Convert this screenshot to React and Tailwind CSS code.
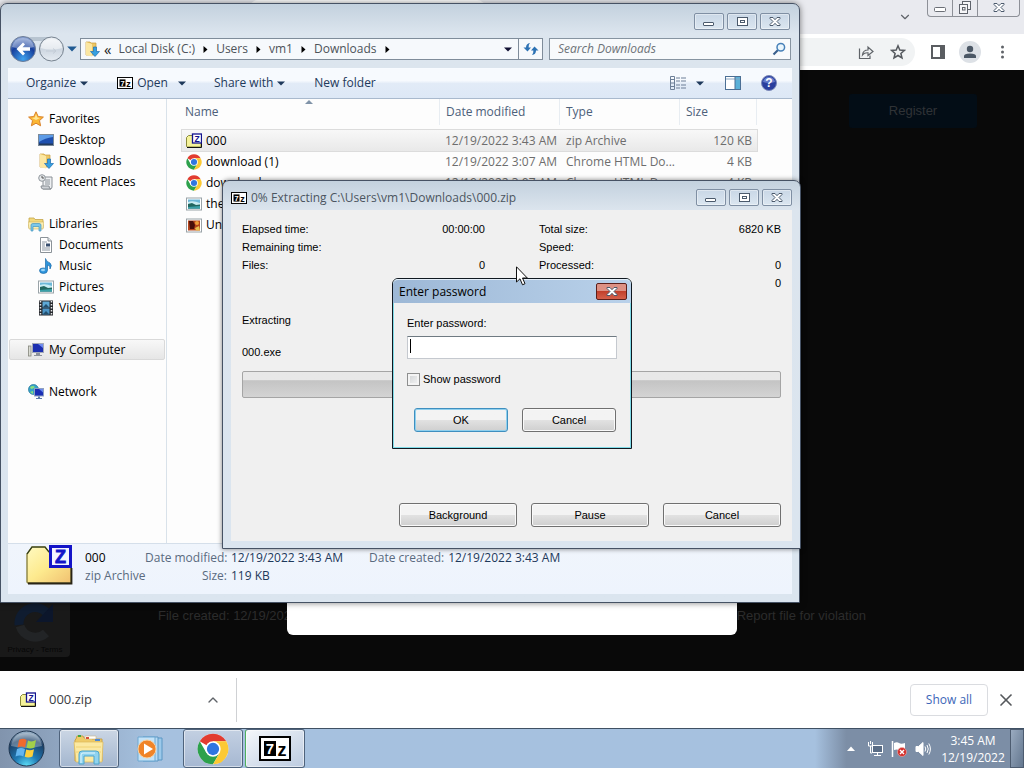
import { useState } from "react";
import { ChevronDown, ChevronUp, X } from "lucide-react";

const favorites = [
  { name: "Desktop", icon: DesktopIcon },
  { name: "Downloads", icon: DownloadsIcon },
  { name: "Recent Places", icon: RecentIcon },
];

const libraries = [
  { name: "Documents", icon: DocumentIcon },
  { name: "Music", icon: MusicIcon },
  { name: "Pictures", icon: PictureIcon },
  { name: "Videos", icon: VideoIcon },
];

const files = [
  { name: "000", date: "12/19/2022 3:43 AM", type: "zip Archive", size: "120 KB", icon: ZipIcon, selected: true },
  { name: "download (1)", date: "12/19/2022 3:07 AM", type: "Chrome HTML Do...", size: "4 KB", icon: ChromeIcon },
  { name: "download", date: "12/19/2022 3:07 AM", type: "Chrome HTML Do...", size: "4 KB", icon: ChromeIcon },
  { name: "the", date: "", type: "", size: "", icon: PictureIcon },
  { name: "Unt", date: "", type: "", size: "", icon: PhotoIcon },
];

/* ---------- icons ---------- */

function ZipIcon({ className = "size-4" }) {
  return (
    <svg className={className} viewBox="0 0 16 16" aria-hidden="true">
      <path d="M.5 13.5V4.5L2.5 2.5H6L7 4H15V14H1Z" fill="#f5f29a" stroke="#8a8a3a" />
      <path d="M1 14.5H15.5V10" fill="none" stroke="#111" />
      <rect x="6.5" y="1" width="9" height="9" fill="#fff" stroke="#12128e" strokeWidth="1.3" />
      <text x="11" y="8.6" fontSize="8.5" fontWeight="bold" textAnchor="middle" fill="#12128e" fontFamily="Liberation Sans, sans-serif">Z</text>
    </svg>
  );
}

function BigZipIcon() {
  return (
    <svg className="h-[42px] w-[47px]" viewBox="0 0 47 42" aria-hidden="true">
      <defs>
        <linearGradient id="bigfolder" x1="0" y1="0" x2="1" y2="1">
          <stop offset="0" stopColor="#fffac0" />
          <stop offset=".5" stopColor="#fdea8e" />
          <stop offset="1" stopColor="#f0c070" />
        </linearGradient>
      </defs>
      <path d="M1 38V10L6 3H19L23 8H45V39H2Z" fill="url(#bigfolder)" stroke="#8b8340" strokeWidth="1.4" />
      <path d="M1 10L6 3H19L23 8" fill="none" stroke="#2b3a1a" strokeWidth="1.2" />
      <path d="M2 39.5H45.5V24" fill="none" stroke="#2a2516" strokeWidth="1.8" />
      <rect x="24.5" y="2.5" width="20" height="20" fill="#f4f4ff" stroke="#1414c8" strokeWidth="3" />
      <text x="34.5" y="19" fontSize="18" fontWeight="bold" textAnchor="middle" fill="#1414c8" stroke="#1414c8" strokeWidth=".8" fontFamily="Liberation Sans, sans-serif">Z</text>
    </svg>
  );
}

function SevenZipIcon({ className = "h-3 w-4" }) {
  return (
    <svg className={className} viewBox="0 0 32 25" preserveAspectRatio="none" aria-hidden="true">
      <rect x="1" y="1" width="30" height="23" fill="#fff" stroke="#000" strokeWidth="2" />
      <rect x="5" y="5" width="12" height="15" fill="#000" />
      <text x="11" y="18" fontSize="15" fontWeight="bold" textAnchor="middle" fill="#fff" fontFamily="Liberation Sans, sans-serif">7</text>
      <text x="23" y="20" fontSize="18" fontWeight="bold" textAnchor="middle" fill="#000" fontFamily="Liberation Sans, sans-serif">z</text>
    </svg>
  );
}

function ChromeIcon({ className = "size-4" }) {
  return (
    <svg className={className} viewBox="0 0 48 48" aria-hidden="true">
      <circle cx="24" cy="24" r="23" fill="#fff" />
      <path d="M24 24L4.080 12.500A23 23 0 0 1 43.920 12.500H24Z" fill="#e23c30" />
      <path d="M14.040 29.750L4.080 12.500A23 23 0 0 0 24 47L33.960 29.750Z" fill="#2da14c" />
      <path d="M24 47A23 23 0 0 0 43.920 12.500H24L33.960 29.750Z" fill="#fcc934" />
      <circle cx="24" cy="24" r="11.500" fill="#fff" />
      <circle cx="24" cy="24" r="9.200" fill="#2f76e0" />
    </svg>
  );
}

function PictureIcon({ className = "size-4" }) {
  return (
    <svg className={className} viewBox="0 0 16 16" aria-hidden="true">
      <rect x=".5" y="2" width="15" height="12" fill="#fff" stroke="#9aa3a8" />
      <rect x="2" y="3.500" width="12" height="9" fill="#6db8d8" />
      <path d="M2 6Q7 4 14 7V9H2Z" fill="#c9ecf2" />
      <path d="M2 8L6 7L10 9L14 8.500V12.500H2Z" fill="#22675f" />
      <path d="M2 11L14 10V12.500H2Z" fill="#3aa0a8" />
    </svg>
  );
}

function PhotoIcon({ className = "size-4" }) {
  return (
    <svg className={className} viewBox="0 0 16 16" aria-hidden="true">
      <rect x=".5" y="2" width="15" height="13" fill="#fff" stroke="#9aa3a8" />
      <rect x="2" y="3.500" width="12" height="10" fill="#b5451b" />
      <path d="M3 4H7L9 8L8 12H4Z" fill="#4a0f0a" />
      <circle cx="11" cy="6" r="2" fill="#f0a03a" />
      <path d="M9 11L13 9L14 13.500H10Z" fill="#e8c050" />
    </svg>
  );
}

function StarIcon() {
  return (
    <svg className="size-4" viewBox="0 0 16 16" aria-hidden="true">
      <path d="M8 .8L10.200 5.500L15.400 6.100L11.500 9.600L12.600 14.800L8 12.200L3.400 14.800L4.500 9.600L.6 6.100L5.800 5.500Z" fill="#fbb734" stroke="#d9822b" />
      <path d="M8 3L9.300 6.500L12 7L8 9L4 7L6.800 6.500Z" fill="#ffe696" />
    </svg>
  );
}

function DesktopIcon() {
  return (
    <svg className="size-4" viewBox="0 0 16 16" aria-hidden="true">
      <rect x=".5" y="2.500" width="15" height="11" fill="#1e4fae" stroke="#7a8a9a" />
      <path d="M1 3H15V5Q7 6 1 10Z" fill="#5d9be6" />
      <rect x="1" y="11.500" width="14" height="1.500" fill="#233a5c" />
    </svg>
  );
}

function DownloadsIcon() {
  return (
    <svg className="size-4" viewBox="0 0 16 16" aria-hidden="true">
      <path d="M2 1H6L7 2H12V14H2Z" fill="#ecc765" stroke="#c99c3c" strokeWidth=".7" />
      <path d="M2 1L8 3V15.500L2 14Z" fill="#fbe7a2" />
      <path d="M9.500 6H12.500V10.500H15.500L11 15.500L6.500 10.500H9.500Z" fill="#36a0e0" stroke="#1c6fb4" strokeWidth=".7" />
    </svg>
  );
}

function RecentIcon() {
  return (
    <svg className="size-4" viewBox="0 0 16 16" aria-hidden="true">
      <path d="M5 3H14V13Q14 15 12 15H5Z" fill="#eef0f2" stroke="#8a9096" />
      <path d="M3 12H11Q11 15 13 15H5Q3 15 3 12Z" fill="#cfd3d7" stroke="#8a9096" />
      <path d="M7 6H12M7 8H12M7 10H12" stroke="#8a9299" />
      <circle cx="4" cy="4" r="3.300" fill="#e7eaec" stroke="#90979d" />
      <path d="M4 2V4H6" fill="none" stroke="#555" />
    </svg>
  );
}

function LibraryIcon() {
  return (
    <svg className="size-4" viewBox="0 0 16 16" aria-hidden="true">
      <path d="M1 2H6L7 3.500H15V12H1Z" fill="#f3d97c" stroke="#c3a44a" strokeWidth=".8" />
      <path d="M0 6H16L15 13H1Z" fill="#fbeeb4" stroke="#cdb25c" strokeWidth=".6" />
      <path d="M3 15V9Q3 7.500 5 7.500H11Q13 7.500 13 9V15H11V10.500H5V15Z" fill="#7cc7ea" stroke="#4595bd" strokeWidth=".7" />
    </svg>
  );
}

function DocumentIcon() {
  return (
    <svg className="size-4" viewBox="0 0 16 16" aria-hidden="true">
      <path d="M2.500 .5H10L13.500 4V15.500H2.500Z" fill="#fff" stroke="#8b9298" />
      <path d="M10 .5V4H13.500" fill="#dde3e8" stroke="#8b9298" />
      <path d="M4 5H9M4 7H7M4 9H7M4 11H12M4 13H12" stroke="#8d97a2" />
      <rect x="8" y="6.500" width="4" height="3" fill="#3a5070" />
    </svg>
  );
}

function MusicIcon() {
  return (
    <svg className="size-4" viewBox="0 0 16 16" aria-hidden="true">
      <path d="M7.500 .5Q8.500 4 12 5Q14.500 7 12 11Q12.500 7.500 9.500 7V12Q9.500 15.500 5.500 15.500Q1.500 15.500 1.500 12.500Q1.500 10 5 10Q6.600 10 7.500 10.500Z" fill="#2f95dc" stroke="#1e6aa8" strokeWidth=".7" />
      <ellipse cx="5" cy="12" rx="2" ry="1.200" fill="#9bd5f7" />
    </svg>
  );
}

function VideoIcon() {
  return (
    <svg className="size-4" viewBox="0 0 16 16" aria-hidden="true">
      <rect x="1" y=".5" width="14" height="15" fill="#26292d" />
      <path d="M2.500 1V15M13.500 1V15" stroke="#e5e8ea" strokeWidth="1.500" strokeDasharray="1.500 1.500" />
      <rect x="4.500" y="1.500" width="7" height="6" fill="#5ea9d6" />
      <rect x="4.500" y="8.500" width="7" height="6" fill="#4b94c6" />
      <path d="M4.500 7.500L8 4L11.500 7.500M4.500 14.500L8 11L11.500 14.500" fill="#234f6e" />
    </svg>
  );
}

function ComputerIcon() {
  return (
    <svg className="size-4" viewBox="0 0 16 16" aria-hidden="true">
      <rect x=".5" y="4" width="2.500" height="10" fill="#dadcd4" stroke="#84867c" strokeWidth=".8" />
      <rect x="4.500" y="1.500" width="11" height="9" fill="#1c2fb0" stroke="#a3a9b8" />
      <path d="M10 2H15V6Z" fill="#6f8cf0" />
      <path d="M8 11H12V13H14V14H6V13H8Z" fill="#8d929c" />
    </svg>
  );
}

function NetworkIcon() {
  return (
    <svg className="size-4" viewBox="0 0 16 16" aria-hidden="true">
      <circle cx="5.500" cy="5.500" r="5" fill="#35a2c9" stroke="#217295" strokeWidth=".7" />
      <path d="M2 3Q5 1 7 3Q5 5 3 5ZM2 8L5 7L5 10Z" fill="#8be07e" />
      <rect x="6.500" y="4.500" width="9" height="7.500" fill="#1a2eb4" stroke="#8fa0c0" />
      <path d="M11 5H15V8.500Z" fill="#6989ee" />
      <path d="M10 12.500H12V14H14V15H8V14H10Z" fill="#5d7ba8" />
    </svg>
  );
}

function Triangle({ className = "" }) {
  return (
    <svg className={"h-[5px] w-2 " + className} viewBox="0 0 8 5" aria-hidden="true">
      <path d="M0 .5H8L4 4.500Z" fill="currentColor" />
    </svg>
  );
}

function CaptionIcon({ kind }) {
  return (
    <svg className="h-3 w-3.5" viewBox="0 0 14 12" fill="#fff" stroke="#4b5a6c" aria-hidden="true">
      {kind === "min" && <rect x="1.500" y="6.500" width="10" height="3" rx=".5" />}
      {kind === "max" && (
        <>
          <rect x="2.500" y="1.500" width="10" height="8" />
          <rect x="5.500" y="4.500" width="4" height="2" />
        </>
      )}
      {kind === "close" && (
        <path d="M2 1.500H5L7 3.700L9 1.500H12V2.500L9 5.500L12 8.500V9.500H9L7 7.300L5 9.500H2V8.500L5 5.500L2 2.500Z" />
      )}
    </svg>
  );
}

/* ---------- shared pieces ---------- */

function CaptionButtons() {
  return (
    <div className="flex gap-[3px]">
      {["min", "max", "close"].map((kind) => (
        <button
          key={kind}
          aria-label={kind}
          className="flex h-[17px] w-[30px] items-center justify-center rounded-[2px] border border-[#7f8fa3] bg-gradient-to-b from-[#c9d7e6] to-[#dbe6f0] shadow-[inset_0_0_0_1px_rgba(255,255,255,0.4)]"
        >
          <CaptionIcon kind={kind} />
        </button>
      ))}
    </div>
  );
}

function ClassicButton({ children, primary, className = "" }) {
  return (
    <button
      className={
        "h-6 rounded-[3px] border bg-gradient-to-b from-[#f3f3f3] from-50% via-[#e2e2e2] via-50% to-[#cfcfcf] text-center " +
        (primary ? "border-[#3f8fbf] shadow-[inset_0_0_0_1px_#8fd0ee] " : "border-[#707070] shadow-[inset_0_0_0_1px_#fafafa] ") +
        className
      }
    >
      {children}
    </button>
  );
}

function SideItem({ icon: Icon, name, nested, selected }) {
  return (
    <li
      className={
        "mr-px ml-px flex h-[21px] items-center gap-[5px] rounded-[2px] border " +
        (nested ? "pl-7 " : "pl-[18px] ") +
        (selected ? "border-[#d9d9d9] bg-gradient-to-b from-[#f8f8f8] to-[#e6e6e6]" : "border-transparent")
      }
    >
      <Icon />
      <span>{name}</span>
    </li>
  );
}

/* ---------- windows ---------- */

function Explorer() {
  return (
    <section className="absolute top-[3px] left-0 flex h-[600px] w-[800px] flex-col rounded-t-[7px] border border-[#465264] bg-gradient-to-b from-[#c3d1de] via-[#dce5ee] via-5% to-[#dbe5ef] px-[7px] pb-2 font-['Open_Sans',sans-serif] text-[12px] leading-[18px] shadow-[0_0_6px_rgba(0,0,0,0.5)]">
      <div className="flex h-[34px] justify-end pt-[9px] pr-[2px]">
        <CaptionButtons />
      </div>

      <div className="flex h-[22px] items-center pr-px">
        <svg className="h-7 w-[56px] shrink-0" viewBox="0 0 56 28" aria-hidden="true">
          <defs>
            <radialGradient id="backfill" cx=".5" cy=".9" r=".9">
              <stop offset="0" stopColor="#3fa2ee" />
              <stop offset=".6" stopColor="#173f9c" />
              <stop offset="1" stopColor="#8fa7d6" />
            </radialGradient>
            <linearGradient id="fwdfill" x1="0" y1="0" x2="0" y2="1">
              <stop offset="0" stopColor="#eef2f6" />
              <stop offset=".5" stopColor="#cdd6e0" />
              <stop offset="1" stopColor="#e6ecf2" />
            </linearGradient>
          </defs>
          <path d="M15 2H44V6H15Z" fill="#b8c4d0" />
          <circle cx="15" cy="14" r="12.500" fill="url(#backfill)" stroke="#6d7c96" />
          <path d="M4 12Q6 3 15 3T26 12Q15 15 4 12Z" fill="#fff" opacity=".35" />
          <path d="M15 7.500L8.500 14L15 20.500L17 18.500L14.500 15.700H22V12.300H14.500L17 9.500Z" fill="#fff" />
          <circle cx="43.500" cy="14" r="12" fill="url(#fwdfill)" stroke="#76828f" />
          <path d="M32.500 13Q34 4 43.500 4T54.500 13Q43 16 32.500 13Z" fill="#fff" opacity=".5" />
          <path d="M38 16H47M45 13.500L48 16L45 18.500" fill="none" stroke="#c3ccd6" />
        </svg>
        <Triangle className="mx-[3px] !h-1.5 !w-2.5 shrink-0 text-[#205a92]" />
        <div className="flex h-[22px] min-w-0 flex-1 items-center border border-[#7f8c9a] bg-[#f6f9fc] pl-[3px] text-[#4d535a]">
          <DownloadsIcon />
          <span className="ml-1 text-[15px] leading-4 text-[#222]">«</span>
          <div className="ml-[7px] flex flex-1 items-center gap-2">
            {["Local Disk (C:)", "Users", "vm1", "Downloads"].map((part) => (
              <span key={part} className="flex items-center gap-2">
                {part}
                <svg className="h-[7px] w-[5px]" viewBox="0 0 5 7" aria-hidden="true">
                  <path d="M.5 0V7L4.500 3.500Z" fill="#000" />
                </svg>
              </span>
            ))}
          </div>
          <Triangle className="mr-1.5 text-[#111133]" />
          <button aria-label="Refresh" className="flex h-5 w-6 items-center justify-center border-l border-[#7f8c9a]">
            <svg className="h-3 w-4" viewBox="0 0 16 12" fill="#2c72b4" aria-hidden="true">
              <path d="M7 0Q5.500 1 5.600 4.500H8L4.500 8.500L.5 4.500H3Q3 .5 7 0Z" />
              <path d="M9 12Q10.500 11 10.400 7.500H8L11.500 3.500L15.500 7.500H13Q13 11.500 9 12Z" />
            </svg>
          </button>
        </div>
        <div className="ml-1.5 flex h-[22px] w-[242px] items-center border border-[#8794a1] bg-[#f8fafc] pr-1 pl-2">
          <input aria-label="Search Downloads" placeholder="Search Downloads" className="min-w-0 flex-1 bg-transparent italic placeholder:text-[#6d7278]" />
          <svg className="size-3.5" viewBox="0 0 14 14" fill="none" aria-hidden="true">
            <path d="M1.500 12.500L6 8" stroke="#3a5f8c" strokeWidth="2.200" />
            <circle cx="8.800" cy="5.200" r="3.800" fill="#eaf6fd" stroke="#4780b8" strokeWidth="1.500" />
          </svg>
        </div>
      </div>

      <div className="mt-2 flex h-[31px] items-center border-t border-b border-t-[#f8fbff] border-b-[#a9b9cd] bg-gradient-to-b from-[#f7fafe] from-40% via-[#e2ebf7] via-50% to-[#dde8f6] pr-[15px] pb-px pl-[18px] text-[#1e395b]">
        <button className="flex items-center gap-1">
          Organize <Triangle />
        </button>
        <button className="ml-[29px] flex items-center gap-1">
          <SevenZipIcon />
          Open <Triangle className="ml-1.5" />
        </button>
        <button className="ml-7 flex items-center gap-1">
          Share with <Triangle />
        </button>
        <button className="ml-[29px]">New folder</button>
        <button aria-label="Views" className="ml-auto flex items-center gap-2.5">
          <svg className="h-3.5 w-4" viewBox="0 0 16 14" fill="none" stroke="#6d7f97" aria-hidden="true">
            <path d="M.5 .5H4.500V13.500H.5ZM.5 3.500H4.500M.5 7H4.500M.5 10.500H4.500" />
            <path d="M6 2H10M11 2H16M6 5H10M11 5H16M6 9H10M11 9H16M6 12H10M11 12H16" />
          </svg>
          <Triangle />
        </button>
        <button aria-label="Preview pane" className="ml-[21px]">
          <svg className="h-3.5 w-4" viewBox="0 0 16 14" aria-hidden="true">
            <rect x=".5" y=".5" width="15" height="13" fill="#fff" stroke="#4c6f94" />
            <rect x="10" y="1" width="5" height="12" fill="#5bb1d8" />
            <path d="M1 3H15" stroke="#8aa5c0" />
            <path d="M10 1V13" stroke="#4c6f94" />
          </svg>
        </button>
        <button aria-label="Help" className="ml-5">
          <svg className="size-4" viewBox="0 0 16 16" aria-hidden="true">
            <circle cx="8" cy="8" r="7.500" fill="#2b3f9e" stroke="#7b88b8" />
            <path d="M2 7Q3 2 8 2T14 7Q8 9 2 7Z" fill="#7f95dd" opacity=".7" />
            <text x="8" y="12.300" fontSize="12" fontWeight="bold" textAnchor="middle" fill="#fff" fontFamily="Liberation Sans, sans-serif">?</text>
          </svg>
        </button>
      </div>

      <div className="flex min-h-0 flex-1 bg-[#fdfdfd]">
        <nav className="w-[159px] shrink-0 border-r border-[#d9e2ea] pt-[9px] text-[#000]">
          <ul>
            <SideItem icon={StarIcon} name="Favorites" />
            {favorites.map((f) => (
              <SideItem key={f.name} {...f} nested />
            ))}
          </ul>
          <ul className="mt-[21px]">
            <SideItem icon={LibraryIcon} name="Libraries" />
            {libraries.map((l) => (
              <SideItem key={l.name} {...l} nested />
            ))}
          </ul>
          <ul className="mt-[21px] flex flex-col gap-[21px]">
            <SideItem icon={ComputerIcon} name="My Computer" selected />
            <SideItem icon={NetworkIcon} name="Network" />
          </ul>
        </nav>

        <div className="relative min-w-0 flex-1 pl-[15px]">
          <svg className="absolute top-px left-[138px] h-1 w-2" viewBox="0 0 8 4" aria-hidden="true">
            <path d="M0 4L4 0L8 4Z" fill="#8093a8" />
          </svg>
          <table className="w-[575px] table-fixed border-separate border-spacing-0 text-[#6d6d6d]">
            <thead>
              <tr className="h-[26px] text-left text-[#4c607a]">
                <th className="w-[258px] border-r border-[#e8edf2] pl-[3px] font-normal">Name</th>
                <th className="w-[120px] border-r border-[#e8edf2] pl-1.5 font-normal">Date modified</th>
                <th className="w-[120px] border-r border-[#e8edf2] pl-1.5 font-normal">Type</th>
                <th className="border-r border-[#e8edf2] pl-1.5 font-normal">Size</th>
              </tr>
              <tr className="h-[5px]" />
            </thead>
            <tbody>
              {files.map((f, i) => (
                <tr
                  key={i}
                  className={"h-[21px] " + (f.selected ? "bg-gradient-to-b from-[#f8f8f8] to-[#e9e9e9] outline outline-[#dcdcdc]" : "")}
                >
                  <td className="p-0 pl-1 text-black">
                    <div className="flex items-center gap-1">
                      <f.icon />
                      {f.name}
                    </div>
                  </td>
                  <td className="p-0 pl-[5px] whitespace-nowrap">{f.date}</td>
                  <td className="p-0 pl-1.5 whitespace-nowrap">{f.type}</td>
                  <td className="p-0 pr-[5px] text-right whitespace-nowrap">{f.size}</td>
                </tr>
              ))}
            </tbody>
          </table>
        </div>
      </div>

      <footer className="flex h-[51px] border-t border-[#d5dfea] bg-gradient-to-b from-[#f0f5fc] to-[#eef4fd] pl-[18px] text-[#5a6b80]">
        <BigZipIcon />
        <div className="ml-3 w-[60px] pt-[5px]">
          <div className="text-black">000</div>
          <div className="whitespace-nowrap">zip Archive</div>
        </div>
        <dl className="grid auto-rows-[18px] grid-cols-[82px_auto] gap-x-1 pt-[5px]">
          <dt className="text-right whitespace-nowrap">Date modified:</dt>
          <dd className="text-[#1e395b]">12/19/2022 3:43 AM</dd>
          <dt className="text-right">Size:</dt>
          <dd className="text-[#1e395b]">119 KB</dd>
        </dl>
        <dl className="flex gap-1 pt-[5px] pl-[26px]">
          <dt>Date created:</dt>
          <dd className="text-[#1e395b]">12/19/2022 3:43 AM</dd>
        </dl>
      </footer>
    </section>
  );
}

function Stat({ label, value }) {
  return (
    <div className="flex h-[18px] justify-between">
      <span>{label}</span>
      <span>{value}</span>
    </div>
  );
}

function ExtractWindow() {
  return (
    <section className="absolute top-[180px] left-[222px] flex h-[369px] w-[579px] flex-col rounded-t-[7px] border border-[#465264] bg-gradient-to-b from-[#c3d1de] via-[#dce5ee] via-8% to-[#dbe5ef] px-2 pb-[7px] shadow-[0_0_5px_rgba(0,0,0,0.5)]">
      <header className="flex h-[29px] items-start pt-2">
        <SevenZipIcon className="mt-[3px] h-3 w-4" />
        <h2 className="ml-1 flex-1 font-['Open_Sans',sans-serif] text-[12px] leading-[18px] text-[#4b5560]">
          0% Extracting C:\Users\vm1\Downloads\000.zip
        </h2>
        <CaptionButtons />
      </header>
      <div className="flex flex-1 flex-col bg-[#f0f0f0] px-[11px] pt-2.5 font-['Liberation_Sans',sans-serif] text-[11px] leading-[18px] text-black">
        <div className="flex gap-[54px]">
          <div className="w-[243px]">
            <Stat label="Elapsed time:" value="00:00:00" />
            <Stat label="Remaining time:" />
            <Stat label="Files:" value="0" />
          </div>
          <div className="flex-1">
            <Stat label="Total size:" value="6820 KB" />
            <Stat label="Speed:" />
            <Stat label="Processed:" value="0" />
            <Stat value="0" />
          </div>
        </div>
        <p className="mt-[19px]">Extracting</p>
        <p className="mt-3.5">000.exe</p>
        <div
          role="progressbar"
          aria-label="Extracting"
          aria-valuenow={0}
          className="mt-2.5 h-[27px] rounded-[2px] border border-[#a5a5a5] bg-gradient-to-b from-[#e8e8e8] from-30% via-[#c4c4c4] via-35% to-[#d4d4d4]"
        />
        <div className="mt-auto mb-3.5 flex justify-end gap-3.5">
          <ClassicButton className="w-[118px]">Background</ClassicButton>
          <ClassicButton className="w-[118px]">Pause</ClassicButton>
          <ClassicButton className="w-[118px]">Cancel</ClassicButton>
        </div>
      </div>
    </section>
  );
}

function PasswordDialog() {
  const [password, setPassword] = useState("");
  const [show, setShow] = useState(false);

  return (
    <form
      onSubmit={(e) => e.preventDefault()}
      className="absolute top-[278px] left-[392px] flex h-[171px] w-60 flex-col rounded-t-[6px] border border-[#101820] bg-[#f0f0f0] font-['Liberation_Sans',sans-serif] text-[11px] leading-[18px] text-black shadow-[inset_0_0_0_1px_#7fdbe8]"
    >
      <header className="flex h-6 items-center justify-between rounded-t-[5px] border-t border-[#e4eef8] bg-gradient-to-r from-[#9db8d6] to-[#b9d1ea] pr-1 pl-1.5">
        <h2 className="font-['Open_Sans',sans-serif] text-[12px]">Enter password</h2>
        <button
          type="button"
          aria-label="Close"
          className="flex h-[17px] w-[31px] items-center justify-center rounded-[2px] border border-[#5c1f1a] bg-gradient-to-b from-[#dd9184] from-45% via-[#c2402c] via-50% to-[#d5604a]"
        >
          <CaptionIcon kind="close" />
        </button>
      </header>
      <div className="flex flex-col pt-[11px] pr-[15px] pl-3.5">
        <label htmlFor="pw">Enter password:</label>
        <div className="relative mt-1">
          <input
            id="pw"
            type={show ? "text" : "password"}
            value={password}
            onChange={(e) => setPassword(e.target.value)}
            className="block h-[23px] w-[210px] border border-[#c5c9cf] border-t-[#6f7a82] bg-white px-0.5 outline-none"
          />
          {!password && <span className="pointer-events-none absolute top-[3px] left-[3px] h-3.5 w-px bg-black" />}
        </div>
        <div className="mt-[11px] flex items-center gap-[3px]">
          <input
            id="show"
            type="checkbox"
            checked={show}
            onChange={(e) => setShow(e.target.checked)}
            className="size-[13px] appearance-none border border-[#8e8f8f] bg-gradient-to-br from-[#cfd2d4] to-[#f6f6f6] shadow-[inset_0_0_0_2px_#f4f4f4] checked:bg-[#4b6a9a]"
          />
          <label htmlFor="show">Show password</label>
        </div>
        <div className="mt-5 flex justify-end gap-3.5">
          <ClassicButton primary className="w-[94px]">OK</ClassicButton>
          <ClassicButton className="w-[94px]">Cancel</ClassicButton>
        </div>
      </div>
    </form>
  );
}

/* ---------- browser and taskbar ---------- */

function Browser() {
  return (
    <div className="flex flex-1 flex-col font-['Open_Sans',sans-serif]">
      <div className="relative flex h-[34px] items-start justify-end bg-[#e9eaef] pr-1">
        <div className="absolute top-0 left-[250px] h-full w-[235px] rounded-t-lg bg-white" />
        <ChevronDown className="mt-2.5 mr-[15px] size-3.5 text-[#5f6368]" />
        <div className="flex h-[17px] rounded-b-[4px] border border-t-0 border-[#8d9097] bg-[#e9eaef]">
          <button aria-label="Minimize" className="flex w-[25px] items-center justify-center border-r border-[#8d9097]">
            <svg className="h-2 w-3" viewBox="0 0 12 8" aria-hidden="true">
              <rect x=".5" y="3.500" width="11" height="4" rx="1" fill="#fff" stroke="#6b6f76" />
            </svg>
          </button>
          <button aria-label="Restore" className="flex w-[25px] items-center justify-center border-r border-[#8d9097]">
            <svg className="size-3.5" viewBox="0 0 14 14" fill="#f6f6f8" stroke="#5f636b" aria-hidden="true">
              <rect x="4.500" y=".5" width="8" height="8" />
              <rect x="1.500" y="3.500" width="8" height="9" />
              <rect x="4.500" y="6.500" width="2.500" height="2.500" />
            </svg>
          </button>
          <button aria-label="Close browser" className="flex w-[41px] items-center justify-center">
            <CaptionIcon kind="close" />
          </button>
        </div>
      </div>

      <div className="flex h-9 items-center justify-end bg-white pr-2.5">
        <div className="flex h-7 flex-1 items-center justify-end gap-4 rounded-full bg-[#f1f3f4] pr-[9px]">
          <svg className="size-4" viewBox="0 0 16 16" fill="none" stroke="#5f6368" strokeWidth="1.200" aria-hidden="true">
            <path d="M1.500 4.500V14.500H12V11.500" />
            <path d="M4.500 11Q5 6 10 6V3L15 7.500L10 11.500V8.800Q6.500 8.500 4.500 11Z" />
          </svg>
          <svg className="size-4" viewBox="0 0 16 16" fill="none" stroke="#55595e" strokeWidth="1.500" aria-hidden="true">
            <path d="M8 1.800L9.800 6L14.400 6.400L10.900 9.400L12 14L8 11.500L4 14L5.100 9.400L1.600 6.400L6.200 6Z" />
          </svg>
        </div>
        <svg className="ml-4 h-3.5 w-3.5" viewBox="0 0 14 14" aria-hidden="true">
          <rect x="1" y="1" width="12" height="12" fill="#fff" stroke="#5a5d61" strokeWidth="2" />
          <rect x="9" y="1" width="4" height="12" fill="#5a5d61" />
        </svg>
        <svg className="ml-3.5 size-[22px]" viewBox="0 0 22 22" aria-hidden="true">
          <circle cx="11" cy="11" r="11" fill="#dde1e6" />
          <circle cx="11" cy="8" r="3.200" fill="#4c5866" />
          <path d="M5 17V15Q5 12.500 11 12.500T17 15V17Z" fill="#4c5866" />
        </svg>
        <svg className="mr-2.5 ml-5 h-3.5 w-[3px]" viewBox="0 0 3 14" fill="#5f6368" aria-hidden="true">
          <circle cx="1.500" cy="2" r="1.500" />
          <circle cx="1.500" cy="7" r="1.500" />
          <circle cx="1.500" cy="12" r="1.500" />
        </svg>
      </div>

      <main className="relative flex flex-1 flex-col justify-between bg-[#090909] pt-6 pb-[46px] font-['Liberation_Sans',sans-serif] text-[13px] leading-[18px]">
        <button className="mr-[47px] h-[34px] w-[128px] self-end rounded-[3px] bg-[#030d16] text-[#303336]">Register</button>
        <div className="flex justify-between px-[158px] text-[#2c2c2c]">
          <span>File created: 12/19/2022</span>
          <a href="#report" className="whitespace-nowrap">Report file for violation</a>
        </div>
        <div className="absolute bottom-9 left-[287px] h-[300px] w-[450px] rounded-b-[6px] bg-white" />
        <div className="absolute bottom-3.5 left-0 flex h-16 w-[70px] flex-col items-center justify-end rounded-r-sm bg-[#191919] pb-px text-[8px] leading-3 text-[#060606]">
          <svg className="size-11" viewBox="0 0 44 44" fill="none" strokeWidth="9" aria-hidden="true">
            <path d="M7 26A16 16 0 0 0 33 33" stroke="#222426" />
            <path d="M6 25A16 16 0 0 1 34 13" stroke="#0f1c30" />
            <path d="M40 4V22H23Z" fill="#0c162b" />
          </svg>
          <span>Privacy - Terms</span>
        </div>
      </main>

      <div className="flex h-[57px] items-center bg-white text-[#3c4043]">
        <div className="flex h-11 w-[237px] items-center border-r border-[#cfd1d4] pl-5">
          <ZipIcon />
          <span className="ml-[13px] flex-1 text-[13px]">000.zip</span>
          <ChevronUp className="mr-[15px] size-4 text-[#5f6368]" />
        </div>
        <button className="ml-auto h-8 w-[78px] rounded-[4px] border border-[#dadce0] text-[12px] text-[#3c66b8]">Show all</button>
        <button aria-label="Close downloads" className="mr-2 ml-2">
          <X className="size-5 text-[#55585c]" strokeWidth={2} />
        </button>
      </div>
    </div>
  );
}

function Taskbar() {
  const openApp =
    "flex h-[39px] w-[60px] items-center justify-center rounded-[3px] border border-[#4f637c] shadow-[inset_0_0_0_1px_rgba(255,255,255,0.5)] ";

  return (
    <div className="relative z-10 flex h-10 items-center border-t border-[#3f5063] bg-gradient-to-r from-[#8194ad] via-[#a6c1df] via-15% to-[#a6c1df] font-['Open_Sans',sans-serif]">
      <button aria-label="Start" className="mr-3.5 ml-2">
        <svg className="size-[37px]" viewBox="0 0 37 37" aria-hidden="true">
          <defs>
            <radialGradient id="orb" cx=".5" cy="1" r="1">
              <stop offset="0" stopColor="#5ee0f8" />
              <stop offset=".35" stopColor="#1f7ab5" />
              <stop offset=".75" stopColor="#1b3f66" />
              <stop offset="1" stopColor="#a9c0d4" />
            </radialGradient>
          </defs>
          <circle cx="18.500" cy="18.500" r="17.500" fill="url(#orb)" stroke="#1f3650" />
          <path d="M3 16Q5 3 18.500 3T34 16Q18 20 3 16Z" fill="#fff" opacity=".3" />
          <path d="M11 10Q15 7.500 18.500 10L17 17.500Q13.500 15.500 9.500 17.500Z" fill="#ef6a2e" />
          <path d="M20 10.500Q24 12.500 28 10L26.500 17.500Q22.500 19.500 18.500 17.800Z" fill="#a2d04a" />
          <path d="M9 19Q13 17 17 19L15.300 26.500Q12 24.500 7.500 26.500Z" fill="#62b5f0" />
          <path d="M18.200 19.500Q22 21.300 26 19.200L24.500 26.500Q20.500 28.500 16.700 26.800Z" fill="#fccf3c" />
        </svg>
      </button>
      <button aria-label="Windows Explorer" className={openApp + "bg-gradient-to-b from-[#cbd6e4] to-[#a3b6cf]"}>
        <svg className="size-8" viewBox="0 0 32 32" aria-hidden="true">
          <path d="M3 6L4 3H10L11 5H18L19 6H29V28H2V7Z" fill="#eecb67" stroke="#c9a14a" />
          <rect x="5" y="2" width="3" height="2" fill="#41a541" />
          <path d="M12 3H23V6H12Z" fill="#fff" stroke="#cbb684" strokeWidth=".6" />
          <rect x="13" y="4" width="3" height="2" fill="#d75038" />
          <rect x="22" y="6" width="5" height="2" fill="#4d88d4" />
          <path d="M1 9H30L29 29H3Z" fill="#fbe9a2" stroke="#dcb959" strokeWidth=".7" />
          <path d="M3 14H28M3 19H28" stroke="#efd274" />
          <path d="M6 31V21Q6 18 9 18H23Q26 18 26 21V31H21V23H11V31Z" fill="#8fd3ef" stroke="#4da4cb" />
          <path d="M8 30V22Q8 20 10 20H22" fill="none" stroke="#e4f7fd" />
        </svg>
      </button>
      <button aria-label="Media Player" className="flex h-[39px] w-[64px] items-center justify-center">
        <svg className="h-7 w-8" viewBox="0 0 32 28" aria-hidden="true">
          <path d="M12 3L27 3V25H12Z" fill="#9cc9ea" stroke="#5a97c4" />
          <path d="M8 2H23V26H8Z" fill="#b8dbf4" stroke="#5a97c4" />
          <path d="M3 2H20V26H3Z" fill="#c4e3f8" stroke="#6ca8d2" />
          <circle cx="12" cy="14" r="9" fill="#f08428" stroke="#f8d0a0" />
          <path d="M9 8.500L18 14L9 19.500Z" fill="#fff" />
        </svg>
      </button>
      <button aria-label="Google Chrome" className={openApp + "mr-0.5 bg-gradient-to-b from-[#c3d0e2] to-[#a6b8d2]"}>
        <ChromeIcon className="size-8" />
      </button>
      <button aria-label="7-Zip" className={openApp + "border-l-[#4fb05c] bg-gradient-to-br from-[#f5f8fb] to-[#bccbe0]"}>
        <SevenZipIcon className="h-[25px] w-8" />
      </button>

      <div className="ml-auto flex h-full items-center bg-gradient-to-r from-[#a6c1df] to-[#7c8ea6] to-15% pl-8 text-white">
        <svg className="h-1.5 w-2" viewBox="0 0 8 6" aria-hidden="true">
          <path d="M0 5L4 .5L8 5Z" fill="#fff" />
        </svg>
        <svg className="ml-3 size-4" viewBox="0 0 16 16" fill="none" aria-hidden="true">
          <rect x="5.500" y="4.500" width="10" height="7" fill="#5a6d86" stroke="#fff" />
          <path d="M10.500 12V14.500M7 14.500H14" stroke="#fff" />
          <path d="M1.500 1V5H5.500V1M3.500 0V3M3.500 5V12H5" stroke="#fff" />
        </svg>
        <svg className="ml-2 size-4" viewBox="0 0 16 16" aria-hidden="true">
          <path d="M1.500 0V16" stroke="#fff" strokeWidth="1.500" />
          <path d="M3 2Q6 .5 8 2T14 2V9Q10 10 8 9T3 9Z" fill="#fff" />
          <circle cx="11" cy="11" r="4.500" fill="#d32f2b" stroke="#f2b4b0" strokeWidth=".6" />
          <path d="M9 9L13 13M13 9L9 13" stroke="#fff" strokeWidth="1.400" />
        </svg>
        <svg className="ml-2 size-4" viewBox="0 0 16 16" fill="none" stroke="#fff" aria-hidden="true">
          <path d="M1 5.500H3.500L8 1.500V14.500L3.500 10.500H1Z" fill="#fff" />
          <path d="M10 5.500Q11.500 8 10 10.500M12 4Q14.500 8 12 12M13.800 2.500Q17 8 13.800 13.500" />
        </svg>
        <div className="mr-[5px] ml-2.5 w-16 text-center text-[12px] leading-[17px] whitespace-nowrap">
          <div>3:45 AM</div>
          <div>12/19/2022</div>
        </div>
        <button aria-label="Show desktop" className="h-full w-3.5 border border-[#4d5c70] bg-gradient-to-br from-[#9aabc0] to-[#64778f]" />
      </div>
    </div>
  );
}

export default function App() {
  return (
    <div className="relative flex h-screen flex-col overflow-hidden">
      <Browser />
      <Taskbar />
      <Explorer />
      <ExtractWindow />
      <PasswordDialog />
      {/* mouse pointer */}
      <svg className="absolute top-[266px] left-[516px] h-5 w-3" viewBox="0 0 12 20" aria-hidden="true">
        <path d="M.5 .8V16L4 12.800L6.500 18.800L9 17.700L6.500 12H11.300Z" fill="#fff" stroke="#111" />
      </svg>
    </div>
  );
}
